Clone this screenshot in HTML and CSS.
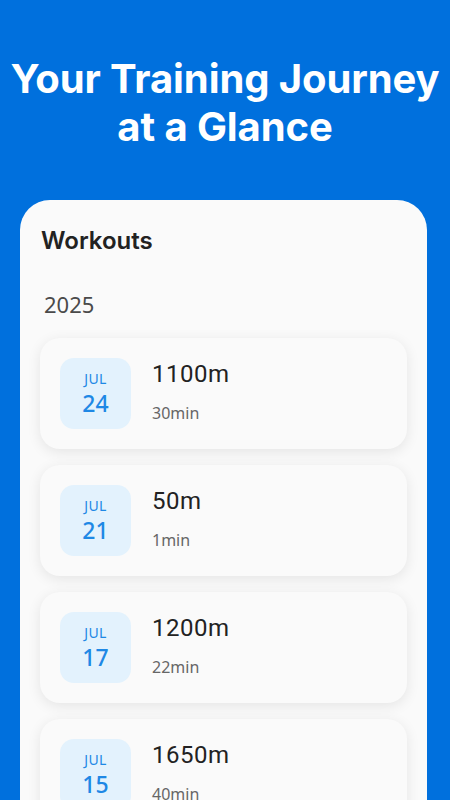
FILE: index.html
```html
<!DOCTYPE html>
<html lang="en">
<head>
<meta charset="utf-8">
<title>Your Training Journey</title>
<link rel="stylesheet" href="styles.css">
</head>
<body>
<main class="screen">
  <h1 class="headline">Your Training Journey<br>at a Glance</h1>
  <section class="panel">
    <h2 class="panel-title">Workouts</h2>
    <h3 class="year">2025</h3>
    <ul class="list">
      <li class="workout">
        <div class="date"><span class="month">JUL</span><span class="day">24</span></div>
        <div class="info"><span class="distance">1100m</span><span class="duration">30min</span></div>
      </li>
      <li class="workout">
        <div class="date"><span class="month">JUL</span><span class="day">21</span></div>
        <div class="info"><span class="distance">50m</span><span class="duration">1min</span></div>
      </li>
      <li class="workout">
        <div class="date"><span class="month">JUL</span><span class="day">17</span></div>
        <div class="info"><span class="distance">1200m</span><span class="duration">22min</span></div>
      </li>
      <li class="workout">
        <div class="date"><span class="month">JUL</span><span class="day">15</span></div>
        <div class="info"><span class="distance">1650m</span><span class="duration">40min</span></div>
      </li>
    </ul>
  </section>
</main>
</body>
</html>
```
FILE: styles.css
```css
html, body {
  margin: 0;
  padding: 0;
}
body {
  background: #0070dd;
  width: 450px;
  height: 800px;
  overflow: hidden;
}
.screen {
  display: flex;
  flex-direction: column;
  padding-top: 55px;
}
.headline {
  margin: 0;
  font-family: Inter, "Liberation Sans", sans-serif;
  font-weight: 700;
  font-size: 40px;
  line-height: 48px;
  color: #ffffff;
  text-align: center;
  letter-spacing: -0.1px;
}
.panel {
  margin: 49px 0 0 20px;
  width: 407px;
  background: #fafafa;
  border-radius: 30px 30px 0 0;
  padding: 26px 20px 40px 20px;
  box-sizing: border-box;
  min-height: 700px;
}
.panel-title {
  margin: 0 0 0 1px;
  font-family: Inter, "Liberation Sans", sans-serif;
  font-weight: 600;
  font-size: 24px;
  line-height: 29px;
  color: #222222;
}
.year {
  margin: 34px 0 0 4px;
  font-family: "Noto Sans", "Open Sans", sans-serif;
  font-weight: 400;
  font-size: 22px;
  line-height: 30px;
  color: #4a4a4a;
}
.list {
  list-style: none;
  margin: 19px 0 0 0;
  padding: 0;
  display: flex;
  flex-direction: column;
  gap: 16px;
}
.workout {
  display: flex;
  align-items: flex-start;
  gap: 21px;
  padding: 20px;
  background: #fafafa;
  border-radius: 20px;
  box-shadow: 0 3px 14px rgba(0, 0, 0, 0.09);
}
.date {
  width: 71px;
  height: 71px;
  flex: none;
  border-radius: 14px;
  background: #e3f2fd;
  display: flex;
  flex-direction: column;
  align-items: center;
  justify-content: center;
  font-family: "Noto Sans", "Open Sans", sans-serif;
  color: #1e88e5;
}
.month {
  font-size: 14px;
  line-height: 19px;
  letter-spacing: 0.3px;
}
.day {
  font-size: 23px;
  line-height: 31px;
  font-weight: 500;
}
.info {
  display: flex;
  flex-direction: column;
  padding-top: 2px;
}
.distance {
  font-family: Roboto, "Liberation Sans", sans-serif;
  font-size: 24px;
  line-height: 28px;
  font-weight: 400;
  color: #222222;
  letter-spacing: 0.5px;
}
.duration {
  margin-top: 14px;
  font-family: "Noto Sans", "Open Sans", sans-serif;
  font-size: 16px;
  line-height: 22px;
  color: #666666;
}
```
